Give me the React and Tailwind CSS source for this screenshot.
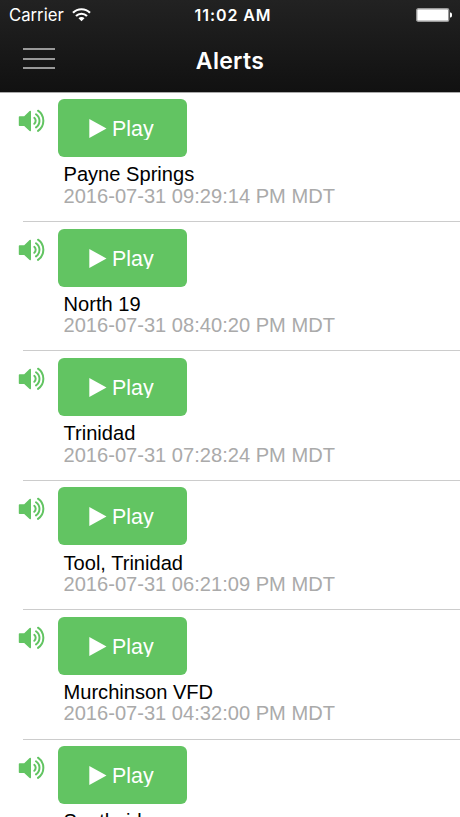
const alerts = [
  { name: 'Payne Springs', time: '2016-07-31 09:29:14 PM MDT' },
  { name: 'North 19', time: '2016-07-31 08:40:20 PM MDT' },
  { name: 'Trinidad', time: '2016-07-31 07:28:24 PM MDT' },
  { name: 'Tool, Trinidad', time: '2016-07-31 06:21:09 PM MDT' },
  { name: 'Murchinson VFD', time: '2016-07-31 04:32:00 PM MDT' },
  { name: 'Southside' },
];

function WifiIcon() {
  return (
    <svg className="ml-[8px] h-[14px] w-[19px]" viewBox="0 0 19 14" fill="none" stroke="#fff" strokeWidth="2.2">
      <path d="M1 4.8a12 12 0 0 1 17 0" />
      <path d="M4 8a7.8 7.8 0 0 1 11 0" />
      <path d="M9.5 13.2L6.5 10.2a4.2 4.2 0 0 1 6 0z" fill="#fff" stroke="none" />
    </svg>
  );
}

function BatteryIcon() {
  return (
    <svg className="h-[14px] w-[37px]" viewBox="0 0 37 14">
      <rect x="0.7" y="0.7" width="32" height="12.6" rx="1.6" fill="#fff" stroke="#999" strokeWidth="1.4" />
      <path d="M34 4.5h.6c1 0 1.4 1 1.4 2.5s-.4 2.5-1.4 2.5H34z" fill="#fff" />
    </svg>
  );
}

function SpeakerIcon() {
  return (
    <svg className="mt-[16px] ml-[18px] h-[24px] w-[28px] shrink-0" viewBox="0 0 28 24" fill="none" stroke="#62c462" strokeWidth="2" strokeLinecap="round">
      <path d="M1.6 7.3H6.2L11.6 2.1Q13 1.2 13 2.7V21.3Q13 22.8 11.6 21.9L6.2 17H1.6Q.8 17 .8 16.2V8.1Q.8 7.3 1.6 7.3z" fill="#62c462" stroke="none" />
      <path d="M16.3 8.8a4 4 0 0 1 0 6" />
      <path d="M18 5.2a8 8 0 0 1 0 13.2" />
      <path d="M20 1.7a12.2 12.2 0 0 1 0 20.2" />
    </svg>
  );
}

function AlertRow({ name, time }) {
  return (
    <div className="flex h-[129.4px]">
      <SpeakerIcon />
      <div className="ml-[11.5px] pt-[6.5px]">
        <button className="flex h-[58px] w-[129.5px] items-start rounded-[6px] bg-[#62c462] pt-[17px] pl-[31.5px] text-white">
          <svg className="mt-[3px] h-[19px] w-[18px]" viewBox="0 0 18 19" fill="#fff">
            <path d="M.3 0L17.5 9.5L.3 19z" />
          </svg>
          <span className="ml-[5px] h-[23.5px] overflow-hidden text-[21.4px] leading-[26px]">Play</span>
        </button>
        <div className="mt-[7.2px] pl-[6px] text-[20.1px] leading-[21.5px] whitespace-nowrap">
          <div className="text-black">{name}</div>
          {time && <div className="text-[#aaa]">{time}</div>}
        </div>
      </div>
    </div>
  );
}

export default function App() {
  return (
    <div className="flex h-[817px] w-[460px] flex-col overflow-hidden bg-white font-['Liberation_Sans',Arial,sans-serif]">
      <header className="h-[91.7px] shrink-0 bg-linear-to-b from-[#222] to-[#111] font-[Inter,sans-serif] text-white">
        <div className="grid h-[30px] grid-cols-[1fr_auto_1fr] items-center pr-[7px] pl-[9px]">
          <div className="flex items-center">
            <span className="text-[16.7px] leading-[30px]">Carrier</span>
            <WifiIcon />
          </div>
          <div className="pl-[4px] text-[16px] leading-[30px] font-semibold tracking-[0.9px]">11:02 AM</div>
          <div className="flex justify-end">
            <BatteryIcon />
          </div>
        </div>
        <div className="grid h-[61px] grid-cols-[1fr_auto_1fr]">
          <div className="mt-[18px] ml-[23px] flex w-[32px] flex-col gap-[7.6px]">
            <span className="h-[2px] bg-[#999]" />
            <span className="h-[2px] bg-[#999]" />
            <span className="h-[2px] bg-[#999]" />
          </div>
          <h1 className="mt-[15px] text-[23px] leading-[32px] font-semibold tracking-[0.3px]">Alerts</h1>
        </div>
      </header>
      <ul className="border-t border-[#aaa]">
        {alerts.map((alert) => (
          <li key={alert.name}>
            <AlertRow {...alert} />
            <div className="-mt-px ml-[23px] h-px bg-[#ccc]" />
          </li>
        ))}
      </ul>
    </div>
  );
}
